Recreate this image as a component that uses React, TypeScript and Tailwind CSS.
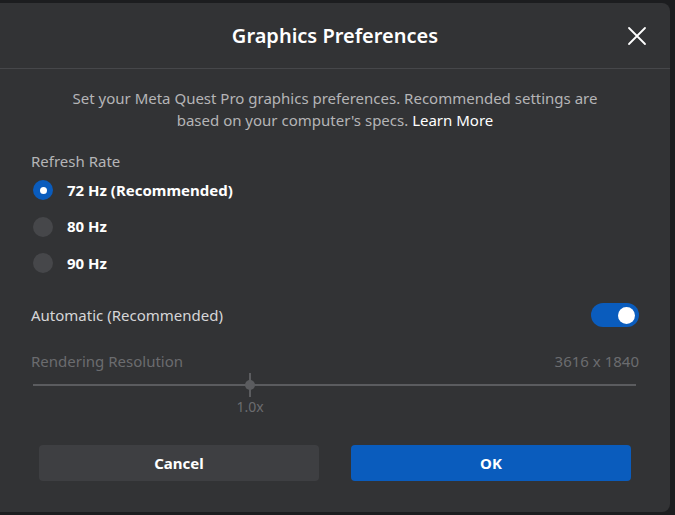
import React from "react";

export default function App() {
  const font = { fontFamily: '"Segoe UI", "Noto Sans", sans-serif' };
  return (
    <div className="w-[675px] h-[515px] bg-[#1c1d1f] overflow-hidden" style={font}>
      <div className="ml-0 mt-[3px] w-[670px] h-[509px] bg-[#323335] rounded-r-[8px] flex flex-col">
        <div className="relative h-[66px] border-b border-[#46474a] flex items-center justify-center">
          <h1 className="text-[20px] font-semibold text-white">Graphics Preferences</h1>
          <button className="absolute right-[22px] top-[22px] w-[22px] h-[22px] flex items-center justify-center">
            <svg width="20" height="20" viewBox="0 0 20 20" fill="none" stroke="white" strokeWidth="1.8" strokeLinecap="round">
              <path d="M2 2L18 18M18 2L2 18" />
            </svg>
          </button>
        </div>
        <div className="px-[31px] flex flex-col">
          <p className="mt-[18px] text-center text-[15px] leading-[22px] text-[#b5b5b7]">
            Set your Meta Quest Pro graphics preferences. Recommended settings are
            <br />
            based on your computer's specs. <span className="text-white">Learn More</span>
          </p>
          <div className="mt-[20px] text-[15px] leading-[20px] text-[#b5b5b7]">Refresh Rate</div>
          <div className="mt-[9px] flex flex-col gap-[16.5px]">
            {[
              { label: "72 Hz (Recommended)", on: true },
              { label: "80 Hz", on: false },
              { label: "90 Hz", on: false },
            ].map((r) => (
              <div key={r.label} className="flex items-center h-[20px]">
                <div
                  className={
                    r.on
                      ? "ml-[2px] w-[20px] h-[20px] rounded-full bg-[#0a5cbd] flex items-center justify-center"
                      : "ml-[2px] w-[20px] h-[20px] rounded-full bg-[#46474a]"
                  }
                >
                  {r.on && <div className="w-[7px] h-[7px] rounded-full bg-white" />}
                </div>
                <span className="ml-[14px] text-[15px] font-bold text-white">{r.label}</span>
              </div>
            ))}
          </div>
          <div className="mt-[30px] flex items-center justify-between h-[24px]">
            <span className="text-[15px] text-[#d6d6d8]">Automatic (Recommended)</span>
            <div className="w-[48px] h-[24px] rounded-full bg-[#0a5cbd] flex items-center justify-end pr-[4px]">
              <div className="w-[17px] h-[17px] rounded-full bg-white" />
            </div>
          </div>
          <div className="mt-[24px] flex items-center justify-between text-[15px] leading-[20px] text-[#6b6c6f]">
            <span>Rendering Resolution</span>
            <span>3616 x 1840</span>
          </div>
          <div className="relative mt-[1px] h-[46px]">
            <div className="absolute left-[2px] right-[3px] top-[12px] h-[2px] bg-[#5b5c5f]" />
            <div className="absolute left-[218px] top-[1px] w-[2px] h-[24px] bg-[#5b5c5f]" />
            <div className="absolute left-[214px] top-[8px] w-[10px] h-[10px] rounded-full bg-[#5b5c5f]" />
            <div className="absolute left-[203px] top-[24px] w-[32px] text-center text-[14px] text-[#6b6c6f]">1.0x</div>
          </div>
          <div className="mt-[27px] px-[8px] flex gap-[32px]">
            <button className="flex-1 h-[36px] rounded-[4px] bg-[#3e3f42] text-white text-[15px] font-bold">Cancel</button>
            <button className="flex-1 h-[36px] rounded-[4px] bg-[#0a5cbd] text-white text-[15px] font-bold">OK</button>
          </div>
        </div>
      </div>
    </div>
  );
}
